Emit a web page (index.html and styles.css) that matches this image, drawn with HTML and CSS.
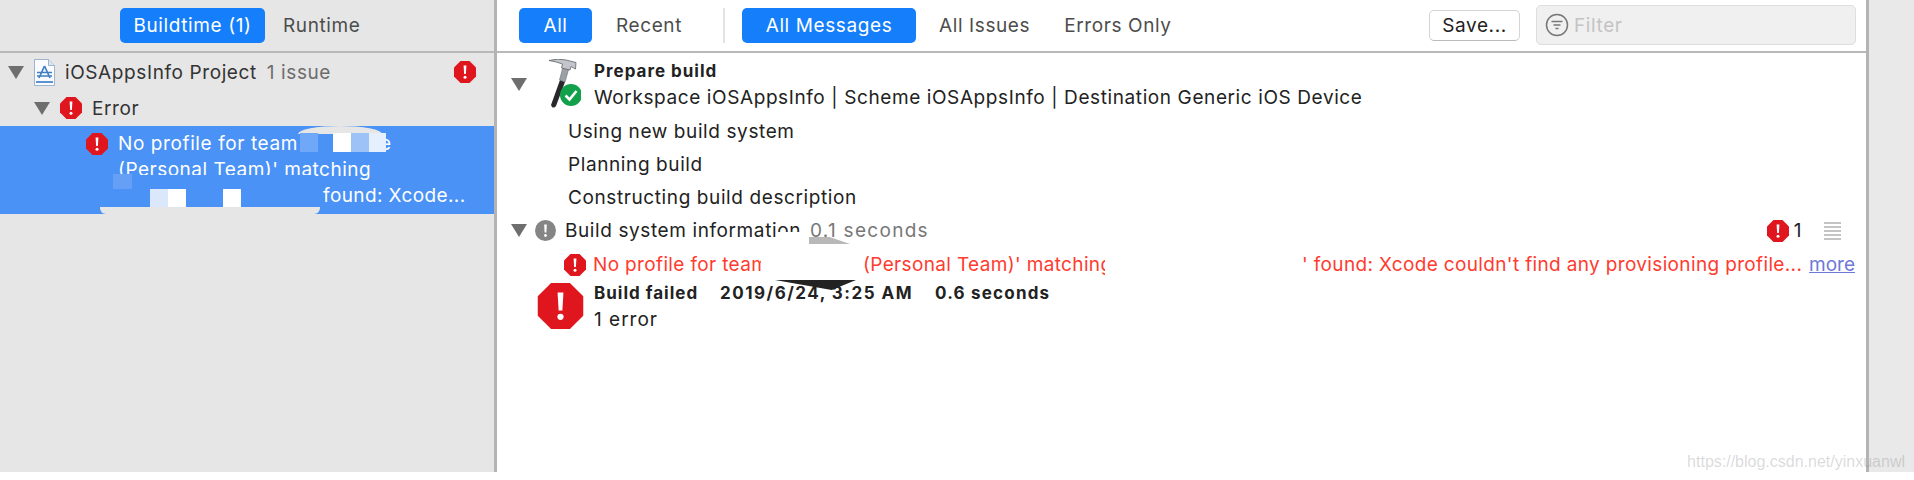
FILE: index.html
```html
<!DOCTYPE html>
<html lang="en">
<head>
<meta charset="utf-8">
<title>Build log</title>
<link rel="stylesheet" href="styles.css">
</head>
<body>
<svg class="defs" width="0" height="0" aria-hidden="true">
  <symbol id="err" viewBox="0 0 22 22">
    <polygon points="6.5,0 15.5,0 22,6.5 22,15.5 15.5,22 6.5,22 0,15.5 0,6.5" fill="#e0161f"/>
    <path d="M9.6 4.500h2.800l-.5 8.600h-1.800z" fill="#fff"/>
    <circle cx="11" cy="16.200" r="1.500" fill="#fff"/>
  </symbol>
</svg>
<div class="app">
  <aside class="sidebar">
    <div class="bar side-bar">
      <span class="seg on seg-build">Buildtime (1)</span>
      <span class="seg-label">Runtime</span>
    </div>
    <div class="tree">
      <div class="tree-row row-project">
        <span class="tri"></span>
        <svg class="doc" viewBox="0 0 21 27" width="21" height="27">
          <path d="M.5.5h14l6 6v20H.5z" fill="#fafcff" stroke="#9db4cf"/>
          <path d="M14.500.5v6h6" fill="#dfe6ee" stroke="#9db4cf"/>
          <path d="M10.500 7 5 19M10.500 7 16 19M3 13.500h15M3 17h15" fill="none" stroke="#3f7fc4" stroke-width="1.700"/>
          <path d="M2 23h17" stroke="#5b93cf" stroke-width="2"/>
        </svg>
        <span class="project-name">iOSAppsInfo Project</span>
        <span class="project-count">1 issue</span>
        <svg class="ic22 push"><use href="#err"/></svg>
      </div>
      <div class="tree-row row-error">
        <span class="tri"></span>
        <svg class="ic22"><use href="#err"/></svg>
        <span class="error-label">Error</span>
      </div>
      <div class="selected">
        <svg class="ic22 sel-icon"><use href="#err"/></svg>
        <div class="sel-text">
          <div class="sel-line sel-l1"><span class="sel-team">No profile for team</span><span>e</span></div>
          <div class="sel-line sel-l2">(Personal Team)' matching</div>
          <div class="sel-line sel-l3">found: Xcode...</div>
        </div>
        <span class="blot gray-top"></span>
        <span class="pix p1"></span><span class="pix p2"></span><span class="pix p3"></span><span class="pix p4"></span>
        <span class="blot blue-mid"></span>
        <span class="pix p5"></span><span class="pix p6"></span><span class="pix p7"></span><span class="pix p8"></span>
        <span class="blot gray-bot"></span>
      </div>
    </div>
  </aside>
  <main class="main">
    <div class="bar main-bar">
      <span class="seg on seg-all">All</span>
      <span class="seg-label lbl-recent">Recent</span>
      <span class="vsep"></span>
      <span class="seg on seg-msgs">All Messages</span>
      <span class="seg-label lbl-issues">All Issues</span>
      <span class="seg-label lbl-errors">Errors Only</span>
      <button class="save">Save...</button>
      <div class="filter">
        <svg viewBox="0 0 24 24" width="24" height="24" class="filter-ic">
          <circle cx="12" cy="12" r="10.500" fill="none" stroke="#777" stroke-width="1.500"/>
          <path d="M6.500 8.500h11M8.500 12h7M10.500 15.500h3" stroke="#777" stroke-width="1.500"/>
        </svg>
        <span class="filter-ph">Filter</span>
      </div>
    </div>
    <div class="log">
      <div class="log-head">
        <span class="tri log-tri"></span>
        <svg class="hammer" viewBox="0 0 32 50" width="32" height="50">
          <path d="M11 21 16 23 7 47Q5 49.500 3 48L2 46z" fill="#26282b"/>
          <path d="M14 8 20 9 16 23 10.500 21z" fill="#9aa0a6" stroke="#6a6f74" stroke-width=".6"/>
          <path d="M0 1.500Q9-1 17 1L27 3.500 26.500 10 22 7.500 21 11 12.500 9 13.500 5Q7 2.500 0 1.500z" fill="#c2c6ca" stroke="#5f6468" stroke-width=".8"/>
          <circle cx="22" cy="36" r="11" fill="#12a04a"/>
          <path d="M16.500 36.500l4 4 7-8.500" fill="none" stroke="#fff" stroke-width="2.600"/>
        </svg>
        <div class="head-text">
          <div class="t-bold">Prepare build</div>
          <div class="t-main">Workspace iOSAppsInfo | Scheme iOSAppsInfo | Destination Generic iOS Device</div>
        </div>
      </div>
      <div class="step">Using new build system</div>
      <div class="step">Planning build</div>
      <div class="step">Constructing build description</div>
      <div class="info-row">
        <span class="tri log-tri"></span>
        <svg class="ic-info" viewBox="0 0 21 21" width="21" height="21">
          <circle cx="10.500" cy="10.500" r="10.500" fill="#858585"/>
          <path d="M9.200 4.500h2.600l-.4 8H9.600z" fill="#fff"/>
          <circle cx="10.500" cy="15.500" r="1.400" fill="#fff"/>
        </svg>
        <span class="info-name">Build system information</span>
        <span class="info-time">0.1 seconds</span>
        <svg class="ic22 info-err"><use href="#err"/></svg>
        <span class="info-num">1</span>
        <svg class="lines" viewBox="0 0 17 18" width="17" height="18">
          <path d="M0 1h17M0 5h17M0 9h17M0 13h17M0 17h17" stroke="#b1b1b1" stroke-width="1.500"/>
        </svg>
      </div>
      <div class="msg-row">
        <svg class="ic22 msg-ic"><use href="#err"/></svg>
        <span class="msg m1">No profile for team</span>
        <span class="msg m2">(Personal Team)' matching</span>
        <span class="msg m3">' found: Xcode couldn't find any provisioning profile...</span>
        <a class="more">more</a>
      </div>
      <div class="fail-row">
        <svg class="ic-fail" viewBox="0 0 22 22" width="47" height="46"><use href="#err"/></svg>
        <div class="fail-text">
          <div class="t-bold fail-meta"><span class="f1">Build failed</span><span class="f2">2019/6/24, 3:25 AM</span><span class="f3">0.6 seconds</span></div>
          <div class="t-main one-error">1 error</div>
        </div>
      </div>
      <span class="smear mask-info"></span>
      <span class="smear mask-a"></span>
      <span class="smear mask-b"></span>
      <span class="smear smear-gray"></span>
      <span class="smear smear-black"></span>
    </div>
  </main>
  <div class="gutter"></div>
</div>
<span class="mark">https://blog.csdn.net/yinxuanwl</span>
</body>
</html>
```
FILE: styles.css
```css
* { box-sizing: border-box; }
html, body { margin: 0; padding: 0; background: #fff; }
body {
  height: 480px;
  overflow: hidden;
  position: relative;
  font-family: Inter, "Liberation Sans", sans-serif;
  font-size: 19px;
  letter-spacing: .6px;
  color: #222;
}
.defs { position: absolute; }
.app { display: flex; height: 472px; }
.sidebar { width: 497px; flex: none; background: #e6e6e6; border-right: 3px solid #b4b4b4; }
.main { width: 1369px; flex: none; background: #fff; position: relative; }
.gutter { flex: 1; background: #e9e9e9; border-left: 3px solid #b4b4b4; }

.bar { height: 53px; display: flex; align-items: center; border-bottom: 2px solid #b9b9b9; padding-bottom: 1px; }
.seg { height: 35px; display: flex; align-items: center; justify-content: center; border-radius: 5px; }
.seg.on { background: #147efb; color: #fff; }
.seg-label { color: #4d4d4d; }
.side-bar { padding-left: 120px; }
.seg-build { width: 145px; margin-right: 18px; }
.main-bar { padding-left: 22px; }
.seg-all { width: 73px; }
.lbl-recent { margin-left: 24px; }
.vsep { width: 2px; height: 35px; background: #e3e3e3; margin-left: 41px; }
.seg-msgs { width: 174px; margin-left: 17px; }
.lbl-issues { margin-left: 23px; }
.lbl-errors { margin-left: 34px; }
.save {
  margin-left: auto;
  width: 91px; height: 31px;
  font: inherit; letter-spacing: inherit; color: #222;
  background: #fff; border: 1px solid #d5d5d5; border-bottom-color: #bbb;
  border-radius: 5px; padding: 0;
}
.filter {
  width: 320px; height: 40px; margin-left: 16px; margin-right: 10px;
  display: flex; align-items: center;
  background: #f0f0f0; border: 1px solid #dedede; border-radius: 5px;
  padding-left: 8px;
}
.filter-ph { color: #c4c4c4; margin-left: 5px; }

.tri {
  flex: none; width: 0; height: 0;
  border-left: 8px solid transparent; border-right: 8px solid transparent;
  border-top: 13px solid #6e6e6e;
}
.ic22 { width: 22px; height: 22px; flex: none; }

.tree { position: relative; padding-top: 1px; }
.tree-row { display: flex; align-items: center; height: 36px; }
.row-project { padding: 0 18px 0 8px; }
.doc { margin-left: 10px; }
.project-name { margin-left: 10px; color: #333; }
.project-count { margin-left: 10px; color: #6d6d6d; }
.push { margin-left: auto; }
.row-error { padding-left: 34px; }
.row-error .ic22 { margin-left: 10px; }
.error-label { margin-left: 10px; color: #333; }

.selected { position: relative; height: 88px; background: #4a92f5; color: #fff; overflow: hidden; }
.sel-icon { position: absolute; left: 86px; top: 7px; }
.sel-text { padding-left: 118px; }
.sel-line { height: 24px; line-height: 24px; white-space: nowrap; }
.sel-l1 { margin-top: 6px; display: flex; }
.sel-team { width: 262px; }
.sel-l2 { margin-top: 2px; letter-spacing: .5px; }
.sel-l3 { padding-left: 205px; margin-top: 2px; letter-spacing: .4px; }
.blot, .pix { position: absolute; display: block; }
.gray-top { left: 298px; top: 0; width: 84px; height: 8px; background: #e6e6e6; clip-path: ellipse(50% 100% at 50% 100%); }
.p1 { left: 300px; top: 7px; width: 18px; height: 19px; background: #6ea8f7; }
.p2 { left: 333px; top: 7px; width: 18px; height: 19px; background: #fff; }
.p3 { left: 351px; top: 7px; width: 18px; height: 19px; background: #9cc2f8; }
.p4 { left: 369px; top: 7px; width: 17px; height: 19px; background: #e6effd; }
.blue-mid { left: 100px; top: 49px; width: 218px; height: 39px; background: #4a92f5; border-radius: 0 6px 6px 0; }
.p5 { left: 113px; top: 48px; width: 19px; height: 15px; background: #669ff6; }
.p6 { left: 150px; top: 63px; width: 18px; height: 18px; background: #dbe8fc; }
.p7 { left: 168px; top: 63px; width: 18px; height: 18px; background: #fff; }
.p8 { left: 223px; top: 63px; width: 18px; height: 18px; background: #fff; }
.gray-bot { left: 100px; top: 81px; width: 220px; height: 7px; background: #e6e6e6; border-radius: 0 0 6px 6px; }

.log { position: relative; padding-top: 3px; }
.log-head { display: flex; align-items: center; height: 56px; padding-left: 14px; }
.hammer { margin-left: 22px; flex: none; }
.head-text { margin-left: 13px; }
.t-bold { font-weight: 700; font-size: 17px; letter-spacing: 1px; line-height: 26px; color: #222; }
.t-main { line-height: 27px; }
.step { height: 33px; line-height: 33px; padding-left: 71px; color: #222; }
.log-head + .step { margin-top: 3px; }
.info-row { display: flex; align-items: center; height: 33px; padding-left: 14px; padding-right: 25px; }
.ic-info { margin-left: 8px; flex: none; }
.info-name { margin-left: 9px; width: 250px; white-space: nowrap; }
.info-time { margin-left: -5px; color: #777; letter-spacing: 1.300px; }
.info-err { margin-left: auto; }
.info-num { margin-left: 5px; }
.lines { margin-left: 22px; }
.msg-row { display: flex; align-items: center; height: 33px; white-space: nowrap; color: #ff3b30; padding: 0 11px 0 67px; margin-top: 1px; letter-spacing: .35px; }
.msg-ic { margin-right: 7px; flex: none; }
.m1 { width: 168px; }
.m2 { width: 242px; margin-left: 102px; }
.m3 { margin-left: 197px; width: 497px; }
.more { margin-left: auto; color: #6f78d8; text-decoration: underline; letter-spacing: 0; }
.fail-row { display: flex; align-items: flex-start; padding-left: 40px; margin-top: -1px; }
.ic-fail { flex: none; margin-top: 3px; }
.fail-text { margin-left: 10px; }
.fail-meta { display: flex; }
.f1 { width: 126px; }
.f2 { width: 215px; letter-spacing: 1.500px; }
.f3 { letter-spacing: 1.200px; }
.one-error { line-height: 28px; letter-spacing: 1px; }
.smear { position: absolute; display: block; }
.mask-info { left: 280px; top: 179px; width: 30px; height: 12px; background: #fff; }
.mask-a { left: 264px; top: 197px; width: 102px; height: 30px; background: #fff; }
.mask-b { left: 608px; top: 197px; width: 197px; height: 30px; background: #fff; }
.smear-gray { left: 312px; top: 184px; width: 41px; height: 7px; background: #b8b8b8; clip-path: polygon(0 0, 50% 0, 100% 100%, 0 100%); }
.smear-black { left: 278px; top: 227px; width: 81px; height: 10px; background: #222; clip-path: polygon(0 0, 100% 0, 70% 100%); }
.mark {
  position: absolute; right: 9px; top: 453px;
  font-family: "Liberation Sans", sans-serif; font-size: 16px; letter-spacing: 0;
  color: rgba(120, 120, 120, .28);
}
```
